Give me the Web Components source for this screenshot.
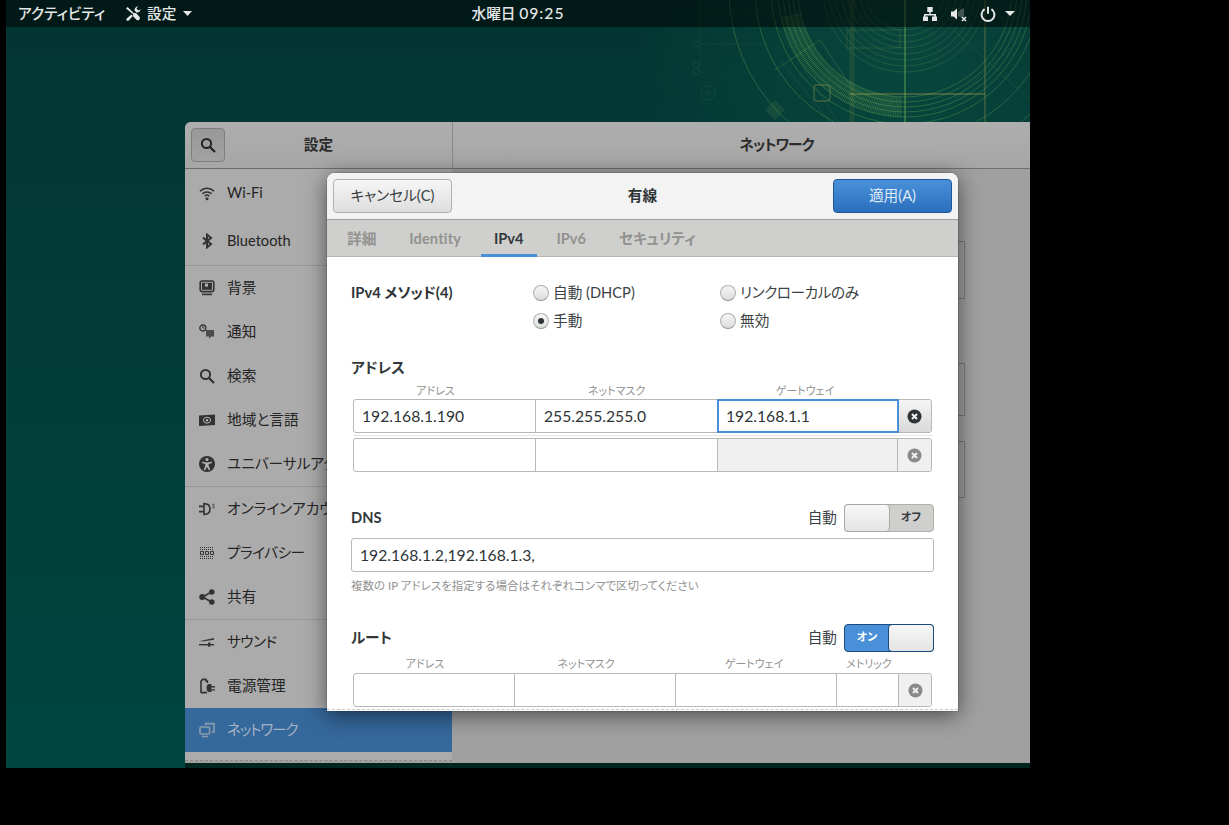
<!doctype html>
<html lang="ja">
<head>
<title>設定</title>
<meta charset="utf-8">
<style>
html, body { margin: 0; height: 100%; background: #000; overflow: hidden; }
body { font: 14.67px/20px Lato, "Noto Sans CJK JP", sans-serif; font-feature-settings: "palt"; color: #2e3436; }
</style>
</head>
<body>
<gnome-desktop>
  <top-bar slot="bar"></top-bar>
  <settings-window>
    <side-item icon="wifi" tall>Wi-Fi</side-item>
    <side-item icon="bluetooth" tall sep>Bluetooth</side-item>
    <side-item icon="background">背景</side-item>
    <side-item icon="notify">通知</side-item>
    <side-item icon="search">検索</side-item>
    <side-item icon="region">地域と言語</side-item>
    <side-item icon="access" sep>ユニバーサルアクセス</side-item>
    <side-item icon="online">オンラインアカウント</side-item>
    <side-item icon="privacy" style="letter-spacing:-.5px">プライバシー</side-item>
    <side-item icon="share" sep>共有</side-item>
    <side-item icon="sound" style="letter-spacing:-.5px">サウンド</side-item>
    <side-item icon="power">電源管理</side-item>
    <side-item icon="network" active style="letter-spacing:-1.2px">ネットワーク</side-item>
  </settings-window>
  <net-dialog heading="有線" slot="dialog">
    <gtk-button slot="start">キャンセル(C)</gtk-button>
    <gtk-button slot="end" suggested>適用(A)</gtk-button>
    <tab-item slot="tabs">詳細</tab-item>
    <tab-item slot="tabs" style="letter-spacing:.15px">Identity</tab-item>
    <tab-item slot="tabs" active>IPv4</tab-item>
    <tab-item slot="tabs">IPv6</tab-item>
    <tab-item slot="tabs">セキュリティ</tab-item>

    <method-grid>
      <b slot="label">IPv4 メソッド(4)</b>
      <radio-option>自動 (DHCP)</radio-option>
      <radio-option style="letter-spacing:-.45px">リンクローカルのみ</radio-option>
      <radio-option checked>手動</radio-option>
      <radio-option>無効</radio-option>
    </method-grid>

    <section-head style="margin-top:23px;height:20px">アドレス</section-head>
    <column-heads cols="169px 193px 184px" style="margin-top:6px;margin-bottom:1px">
      <span>アドレス</span><span>ネットマスク</span><span>ゲートウェイ</span>
    </column-heads>
    <ip-row cols="182px 182px 180px 33px">
      <ip-cell>192.168.1.190</ip-cell><ip-cell>255.255.255.0</ip-cell><ip-cell focused>192.168.1.1</ip-cell><x-button></x-button>
    </ip-row>
    <ip-row cols="182px 182px 180px 33px" divided>
      <ip-cell></ip-cell><ip-cell></ip-cell><ip-cell disabled></ip-cell><x-button disabled></x-button>
    </ip-row>

    <section-head style="margin-top:32px">DNS<on-off slot="end"></on-off></section-head>
    <text-entry style="margin-top:6px">192.168.1.2,192.168.1.3,</text-entry>
    <hint-text style="margin-top:7px">複数の IP アドレスを指定する場合はそれぞれコンマで区切ってください</hint-text>

    <section-head style="margin-top:31px">ルート<on-off slot="end" on></on-off></section-head>
    <column-heads cols="148px 174px 162px 68px" style="margin-top:5px;margin-bottom:2px">
      <span>アドレス</span><span>ネットマスク</span><span>ゲートウェイ</span><span>メトリック</span>
    </column-heads>
    <ip-row cols="161px 161px 161px 62px 32px">
      <ip-cell></ip-cell><ip-cell></ip-cell><ip-cell></ip-cell><ip-cell></ip-cell><x-button disabled></x-button>
    </ip-row>
  </net-dialog>
</gnome-desktop>

<script>
const ICONS = {
  wifi: `<g fill="none" stroke="currentColor" stroke-width="1.5"><path d="M1 6.2a10 10 0 0 1 14 0"/><path d="M3.4 8.8a6.6 6.6 0 0 1 9.2 0"/><path d="M5.7 11.2a3.3 3.3 0 0 1 4.6 0"/></g><circle cx="8" cy="13.8" r="1.5" fill="currentColor"/>`,
  bluetooth: `<path d="M4 4.6 12 11 8 14.4V1.6L12 5 4 11.4" fill="none" stroke="currentColor" stroke-width="2"/>`,
  background: `<rect x="1.2" y="1" width="13.6" height="10.6" rx="2" fill="none" stroke="currentColor" stroke-width="1.6"/><rect x="3" y="2.8" width="10" height="7" fill="currentColor"/><rect x="6" y="3.6" width="3" height="3" fill="#b5b5b5"/><rect x="3" y="13.6" width="10" height="1.6" fill="currentColor"/>`,
  notify: `<circle cx="3.8" cy="4" r="3" fill="none" stroke="currentColor" stroke-width="1.3"/><path d="M3.8 2.4V4H5.2" fill="none" stroke="currentColor"/><path d="M7 6h8v6.6h-3L10 15v-2.4H7z" fill="currentColor" opacity=".8"/>`,
  search: `<circle cx="6.5" cy="6.5" r="4.6" fill="none" stroke="currentColor" stroke-width="2"/><path d="M10 10l5 5" stroke="currentColor" stroke-width="2.2"/>`,
  region: `<path d="M0 3.5 16 2.5V13L0 14z" fill="currentColor"/><ellipse cx="8" cy="8.2" rx="3.6" ry="3" fill="none" stroke="#b5b5b5"/><circle cx="8" cy="8.2" r="1.2" fill="#b5b5b5"/>`,
  access: `<circle cx="8" cy="8" r="8" fill="currentColor"/><circle cx="8" cy="3.6" r="1.5" fill="#b5b5b5"/><path d="M3 5.8 8 6.6l5-.8v1.3l-3.4.9.2 2.2 1.4 3.6-1.3.4L8 10.8l-1.9 3.4-1.3-.4 1.4-3.6.2-2.2L3 7.1z" fill="#b5b5b5"/>`,
  online: `<path d="M5 2.6c4.2 0 6 2.6 6 5.4s-1.8 5.4-6 5.4z" fill="none" stroke="currentColor" stroke-width="1.6"/><path d="M0 5.4h5M0 10.6h5" stroke="currentColor" stroke-width="1.6"/><path d="M15.4 3.6c-1-.8-2-.4-1.9.4.1.9 1.9 1 1.9 2s-1.1 1.2-2 .5" fill="none" stroke="currentColor" stroke-width=".8"/>`,
  privacy: `<g fill="none" stroke="currentColor"><path d="M1 2.5h14M1 4.5h14M1 11.5h14M1 13.5h14" stroke-dasharray="1 1" stroke-width="1.2"/><path d="M1.5 6.5h3v3h-3zM6.5 6.5h3v3h-3zM11.5 6.5h3v3h-3z"/></g>`,
  share: `<path d="M12.5 3 3.5 8l9 5" fill="none" stroke="currentColor" stroke-width="1.6"/><circle cx="12.8" cy="3" r="2.8" fill="currentColor"/><circle cx="3.2" cy="8" r="3" fill="currentColor"/><circle cx="12.8" cy="13" r="2.8" fill="currentColor"/>`,
  sound: `<path d="M0 7.2 15 4v1.8L5 7.2z" fill="currentColor"/><path d="M0 10h15v1.4H0z" fill="currentColor"/><path d="M9 8.6h2.4v4H9z" fill="currentColor"/>`,
  power: `<path d="M2 15V3.2L3.6 1.4h3.4V3h1.4v2" fill="none" stroke="currentColor" stroke-width="1.6"/><path d="M2 14.6h6" stroke="currentColor" stroke-width="1.8"/><path d="M10 6h2.4v2H16v1.4h-3.6v1.8H16v1.4h-3.6V14H10c-1.6 0-2.4-1.4-2.4-4s.8-4 2.4-4z" fill="currentColor"/>`,
  network: `<rect x="1" y="5" width="9.6" height="7" rx="1" fill="none" stroke="currentColor" stroke-width="1.6"/><path d="M3 14.5h6" stroke="currentColor" stroke-width="1.6"/><path d="M6.6 3V1.6H15V10h-2.4" fill="none" stroke="currentColor" stroke-width="1.6"/>`
};

// base class, every element renders its shadow root once it is in the page
class Shadowed extends HTMLElement {
  constructor() {
    super();
    this.attachShadow({ mode: "open" });
  }
  connectedCallback() {
    if (!this.shadowRoot.childNodes.length) this.shadowRoot.innerHTML = this.render();
  }
}

class GnomeDesktop extends Shadowed {
  wallpaper() {
    let s = "";
    const cx = 905, cy = -10;
    for (const r of [40, 46, 52, 58, 64, 70, 76, 82])
      s += `<circle cx="${cx}" cy="${cy}" r="${r}" fill="none" stroke="#a8c860" stroke-opacity=".16"/>`;
    for (const r of [107, 112, 117, 122, 127, 134, 150, 176])
      s += `<circle cx="${cx}" cy="${cy}" r="${r}" fill="none" stroke="#8fd060" stroke-opacity=".26"/>`;
    // hatching of the wide band
    for (let a = 92; a < 168; a += 0.8) {
      const t = a * Math.PI / 180, c = Math.cos(t), n = Math.sin(t);
      s += `<path d="M${cx + 107 * c} ${cy + 107 * n}L${cx + 127 * c} ${cy + 127 * n}" stroke="#8fd060" stroke-opacity=".32" stroke-width=".7"/>`;
    }
    s += `
      <path d="M905 0V122" stroke="#86c45a" stroke-opacity=".35" stroke-width="2"/>
      <path d="M985 0V122" stroke="#b0a44c" stroke-opacity=".24" stroke-width="2"/>
      <path d="M852 0V122" stroke="#b0a44c" stroke-opacity=".12" stroke-width="5"/>
      <path d="M850 94H985" stroke="#b0a44c" stroke-opacity=".32" stroke-width="2"/>
      <path d="M847 30H900V48H847z" fill="none" stroke="#b0a44c" stroke-opacity=".18"/>
      <path d="M775 70 820 40 850 85" fill="none" stroke="#8fd060" stroke-opacity=".2"/>
      <path d="M780 60 830 122M760 0 838 122M930 122 1030 30M950 27 1030 100" stroke="#8fd060" stroke-opacity=".1" fill="none"/>
      <rect x="814" y="85" width="16" height="16" rx="3" fill="none" stroke="#b0a44c" stroke-opacity=".35" stroke-width="1.4"/>
      <path d="M775 100 785 110 775 120 765 110z" fill="#8fae5a" fill-opacity=".12"/>
      <path d="M700 0V75M700 44H770M700 72H750M700 11H790" stroke="#8fd060" stroke-opacity=".07" fill="none"/>
      <g fill="none" stroke="#8fd060" stroke-opacity=".09"><circle cx="696" cy="44" r="3"/><circle cx="696" cy="65" r="3"/><circle cx="696" cy="72" r="3"/><circle cx="708" cy="93" r="7"/><circle cx="708" cy="93" r="2"/></g>`;
    return s;
  }
  render() {
    return `<style>
      :host { display: block; position: relative; width: 1024px; height: 768px; margin-left: 6px; overflow: hidden;
              background: linear-gradient(#033531, #004540); }
      svg { position: absolute; inset: 0; }
    </style>
    <svg width="1024" height="768" viewBox="6 0 1024 768">
      <defs><radialGradient id="glow" gradientUnits="userSpaceOnUse" cx="900" cy="50" r="260">
        <stop offset="0" stop-color="#1f8a68" stop-opacity=".2"/><stop offset="1" stop-color="#1f8a68" stop-opacity="0"/>
      </radialGradient></defs>
      <rect x="600" y="0" width="430" height="130" fill="url(#glow)"/>${this.wallpaper()}
    </svg>
    <slot name="bar"></slot><slot></slot><slot name="dialog"></slot>`;
  }
}

class TopBar extends Shadowed {
  render() {
    return `<style>
      :host { display: grid; grid-template-columns: 1fr auto 1fr; align-items: center; position: relative; height: 27px;
              padding: 0 12px; box-sizing: border-box; background: rgba(0,0,0,.52); color: #e6e8e8; font-weight: 500; }
      .l, .r { display: flex; align-items: center; }
      .r { justify-content: flex-end; padding-right: 3px; }
      svg { display: block; flex: none; }
      .tools { margin-left: 20px; }
      .name { margin-left: 6px; }
      .caret { margin-left: 7px; }
      .vol { margin-left: 12px; }
      .pow { margin-left: 13px; }
      .r .caret { margin-left: 9px; }
      .time { font-size: 15.7px; letter-spacing: 1px; }
    </style>
    <div class="l"><span>アクティビティ</span>
      <svg class="tools" width="16" height="16" viewBox="0 0 16 16"><path d="M1 2.6 2.6 1 9 7.2l2-.3 3.6 4.2c.6 1 .3 2-.3 2.6-.6.6-1.6.9-2.6.3L8 10.2l.2-2zM6.4 8.6l1.4 1.4-4 4.4c-.6.5-1.6.6-2.1 0-.6-.5-.5-1.5 0-2z" fill="currentColor"/><path d="M15.6 3.2c0 2.2-2 3.8-4.2 3.2L9.6 4.6C9.2 2.4 11 .4 13.2.4L11.4 2.4l2 2z" fill="currentColor"/></svg>
      <span class="name">設定</span>
      <svg class="caret" width="9" height="5" viewBox="0 0 9 5"><path d="M0 0h9L4.5 5z" fill="currentColor"/></svg>
    </div>
    <div>水曜日 <span class="time">09:25</span></div>
    <div class="r">
      <svg width="16" height="16" viewBox="0 0 16 16"><path d="M5.3 1h5.4v5H8.7v2h5.3v2.5h1v4.500H10v-4.500h2.500V9.500h-9v1H6v4.500H1v-4.500h1V8h5.300V6H5.300z" fill="currentColor"/></svg>
      <svg class="vol" width="17" height="16" viewBox="0 0 17 16"><path d="M1 5.5h2.5L7 2.5v11l-3.500-3H1z" fill="currentColor"/><path d="M9 5.500v5M11 3.500v8M13 2.500v8" stroke="currentColor" stroke-opacity=".45" stroke-width="1.2" fill="none"/><path d="M12 11l4 4M16 11l-4 4" stroke="currentColor" stroke-width="1.6"/></svg>
      <svg class="pow" width="16" height="16" viewBox="0 0 16 16"><path d="M4.6 3.2a6.4 6.4 0 1 0 6.8 0" fill="none" stroke="currentColor" stroke-width="2"/><path d="M8 .8v7" stroke="currentColor" stroke-width="2"/></svg>
      <svg class="caret" width="10" height="5" viewBox="0 0 10 5"><path d="M0 0h10L5 5z" fill="currentColor"/></svg>
    </div>`;
  }
}

class SettingsWindow extends Shadowed {
  render() {
    return `<style>
      :host { display: grid; grid-template-columns: 268px 1fr; grid-template-rows: 47px 1fr; position: absolute; left: 179px; top: 122px;
              width: 915px; height: 641px; background: #a0a0a0; border-radius: 6px 6px 0 0; box-shadow: 0 5px 0 #02241f; color: #242424; }
      header { display: flex; align-items: center; font-weight: 700; justify-content: center; border-bottom: 1px solid #6f6f6f;
               background: linear-gradient(#aeaeae, #a6a6a6); position: relative; color: #2c2c2c; }
      .title-l { border-right: 1px solid #8a8a8a; border-radius: 6px 0 0 0; display: grid; grid-template-columns: 34px 1fr 40px; padding-left: 6px; align-items: center; }
      .search { width: 34px; height: 34px; box-sizing: border-box; border: 1px solid #7e7e7e; border-radius: 4px; display: grid; place-items: center;
                background: linear-gradient(#989898, #a2a2a2); color: #232323; }
      .title-l span { text-align: center; }
      .title-r { letter-spacing: -1px; }
      aside { background: #ababab; overflow: hidden; border-bottom: 1px dashed #8a8a8a; margin-bottom: 2px; width: 267px; }
      main { padding: 72px 0 0 135px; }
      .frame { width: 377px; box-sizing: border-box; border: 1px solid #7a7a7a; }
    </style>
    <header class="title-l">
      <div class="search"><svg width="16" height="16" viewBox="0 0 16 16">${ICONS.search}</svg></div><span>設定</span>
    </header>
    <header class="title-r">ネットワーク</header>
    <aside><slot></slot></aside>
    <main>
      <div class="frame" style="height:58px"></div>
      <div class="frame" style="height:53px;margin-top:64px"></div>
      <div class="frame" style="height:57px;margin-top:25px"></div>
    </main>`;
  }
}

class SideItem extends Shadowed {
  render() {
    const active = this.hasAttribute("active");
    return `<style>
      :host { display: flex; align-items: center; box-sizing: border-box; height: ${this.hasAttribute("tall") ? 48 : 44}px; padding-left: 14px; gap: 12px;
              white-space: nowrap; ${this.hasAttribute("sep") ? "height:" + (this.hasAttribute("tall") ? 49 : 45) + "px;border-bottom:1px solid #979797;" : ""}
              ${active ? "background:#35689b;color:#a3b4c5;" : ""} }
      svg { flex: none; color: ${active ? "#8b9caf" : "#333"}; }
    </style>
    <svg width="16" height="16" viewBox="0 0 16 16">${ICONS[this.getAttribute("icon")]}</svg><slot></slot>`;
  }
}

class NetDialog extends Shadowed {
  render() {
    return `<style>
      :host { display: flex; flex-direction: column; position: absolute; left: 321px; top: 173px; width: 631px; height: 538px; box-sizing: border-box;
              background: #fff; border-radius: 8px 8px 0 0; box-shadow: 0 4px 22px rgba(0,0,0,.55), 0 0 0 1px rgba(0,0,0,.1); overflow: hidden; }
      header { display: flex; align-items: center; justify-content: space-between; height: 47px; flex: none; box-sizing: border-box; padding: 0 6px;
               background: #f3f3f3; border-bottom: 1px solid #9e9e9b; }
      h1 { font-size: inherit; margin: 0; font-weight: 700; }
      nav { display: flex; gap: 6.8px; flex: none; height: 37px; box-sizing: border-box; padding-left: 7px; background: #cfcfcd; border-bottom: 1px solid #b6b6b3; }
      .body { flex: 1; padding: 22px 24px 0; overflow: hidden; position: relative; }
      .overshoot { position: absolute; left: 0; right: 0; bottom: 1px; border-top: 1px dashed #c8c8c8; }
    </style>
    <header><slot name="start"></slot><h1>${this.getAttribute("heading")}</h1><slot name="end"></slot></header>
    <nav><slot name="tabs"></slot></nav>
    <div class="body"><slot></slot><div class="overshoot"></div></div>`;
  }
}

class GtkButton extends Shadowed {
  render() {
    const s = this.hasAttribute("suggested");
    return `<style>
      :host { display: flex; align-items: center; justify-content: center; width: 119px; height: 34px; box-sizing: border-box; border-radius: 4px;
              border: 1px solid ${s ? "#1c5799" : "#b0b0ae"}; color: ${s ? "#dfeaf6" : "#3a3f41"};
              background: linear-gradient(${s ? "#4a90d9, #2a6fbd" : "#f6f6f6, #dedede"}); }
    </style><slot></slot>`;
  }
}

class TabItem extends Shadowed {
  render() {
    const a = this.hasAttribute("active");
    return `<style>
      :host { display: flex; align-items: center; padding: 0 13px; height: 36px; box-sizing: border-box; font-weight: 700; padding-top: 1px;
              color: ${a ? "#33393b" : "#92928f"}; ${a ? "border-bottom:3px solid #4a90d9;height:37px;padding-top:3px;" : ""} }
    </style><slot></slot>`;
  }
}

class MethodGrid extends Shadowed {
  render() {
    return `<style>
      :host { display: grid; grid-template-columns: 182px 1fr; grid-template-rows: 28px 28px; }
      .l { display: flex; align-items: center; grid-row: 1; }
      .radios { display: grid; grid-template-columns: 187px 1fr; grid-auto-rows: 28px; grid-row: 1 / 3; }
    </style>
    <div class="l"><slot name="label"></slot></div>
    <div class="radios"><slot></slot></div>`;
  }
}

class RadioOption extends Shadowed {
  render() {
    return `<style>
      :host { display: flex; align-items: center; gap: 4px; color: #3c4244; }
      i { width: 16px; height: 16px; box-sizing: border-box; border-radius: 50%; border: 1px solid #b0b0ae; border-bottom-color: #98988f;
          background: linear-gradient(#f7f7f7, #dcdcdc); display: grid; place-items: center; flex: none; }
      u { width: 6px; height: 6px; border-radius: 50%; background: #2e3436; }
    </style><i>${this.hasAttribute("checked") ? "<u></u>" : ""}</i><span><slot></slot></span>`;
  }
}

class SectionHead extends Shadowed {
  render() {
    return `<style>
      :host { display: flex; align-items: center; justify-content: space-between; font-weight: 700; color: #33393b; }
      .end { display: flex; align-items: center; gap: 7px; font-weight: 400; color: #3c4244; }
    </style><span><slot></slot></span>
    ${this.querySelector("[slot=end]") ? `<div class="end"><span>自動</span><slot name="end"></slot></div>` : ""}`;
  }
}

class ColumnHeads extends Shadowed {
  render() {
    return `<style>
      :host { display: grid; grid-template-columns: ${this.getAttribute("cols")}; height: 14px; line-height: 14px; font-size: 11px; color: #929292; }
      ::slotted(span) { text-align: center; }
    </style><slot></slot>`;
  }
}

class IpRow extends Shadowed {
  render() {
    return `<style>
      :host { display: grid; grid-template-columns: ${this.getAttribute("cols")}; margin: 0 2px; height: 34px; box-sizing: border-box;
              border: 1px solid #b8b8b5; border-radius: 3px; background: #fff; position: relative; }
      ${this.hasAttribute("divided") ? ":host { margin-top: 5px; } .line { position: absolute; left: -1px; right: -2px; top: -4px; border-top: 1px solid #e4e4e4; }" : ""}
    </style>${this.hasAttribute("divided") ? '<div class="line"></div>' : ""}<slot></slot>`;
  }
}

class IpCell extends Shadowed {
  render() {
    const f = this.hasAttribute("focused"), d = this.hasAttribute("disabled");
    return `<style>
      :host { display: flex; align-items: center; padding-left: 8px; box-sizing: border-box; font-size: 15.7px; color: #2e3436;
              border-right: 1px solid #b8b8b5; position: relative; ${d ? "background:#f0f0f0;" : ""}
              ${f ? "border-right:0;box-shadow:inset 0 0 0 1px #4a90d9,0 0 0 1px #4a90d9;z-index:1;" : ""} }
    </style><slot></slot>`;
  }
}

class XButton extends Shadowed {
  render() {
    const d = this.hasAttribute("disabled");
    return `<style>
      :host { display: grid; place-items: center; border-radius: 0 3px 3px 0; color: ${d ? "#8a8a8a" : "#2e3436"};
              background: ${d ? "#f0f0f0" : "linear-gradient(#f5f5f5, #d9d9d9)"}; }
    </style><svg width="15" height="15" viewBox="0 0 15 15"><circle cx="7.5" cy="7.5" r="7" fill="currentColor"/><path d="M5 5l5 5M10 5l-5 5" stroke="#f0f0f0" stroke-width="2"/></svg>`;
  }
}

class OnOff extends Shadowed {
  render() {
    const on = this.hasAttribute("on");
    const knob = `<i></i>`, label = `<span>${on ? "オン" : "オフ"}</span>`;
    return `<style>
      :host { display: flex; width: 90px; height: 28px; box-sizing: border-box; border-radius: 4px; border: 1px solid ${on ? "#1c4a7a" : "#b0afaa"};
              background: ${on ? "#4a90d9" : "#cfcfcd"}; color: ${on ? "#fff" : "#33393b"}; font-size: 11px; font-weight: 700; }
      span { flex: 1; text-align: center; line-height: 24px; }
      i { width: 46px; margin: -1px; box-sizing: border-box; border-radius: 4px; border: 1px solid ${on ? "#1c4a7a" : "#a8a8a4"}; background: linear-gradient(#f7f7f7, #e4e4e4); }
    </style>${on ? label + knob : knob + label}`;
  }
}

class TextEntry extends Shadowed {
  render() {
    return `<style>
      :host { display: flex; align-items: center; height: 34px; box-sizing: border-box; padding-left: 8px; font-size: 15.7px; color: #2e3436;
              border: 1px solid #b8b8b5; border-radius: 3px; }
    </style><slot></slot>`;
  }
}

class HintText extends Shadowed {
  render() {
    return `<style>
      :host { display: block; height: 14px; line-height: 14px; font-size: 11.5px; color: #929292; white-space: nowrap; }
    </style><slot></slot>`;
  }
}

customElements.define("gnome-desktop", GnomeDesktop);
customElements.define("top-bar", TopBar);
customElements.define("settings-window", SettingsWindow);
customElements.define("side-item", SideItem);
customElements.define("net-dialog", NetDialog);
customElements.define("gtk-button", GtkButton);
customElements.define("tab-item", TabItem);
customElements.define("method-grid", MethodGrid);
customElements.define("radio-option", RadioOption);
customElements.define("section-head", SectionHead);
customElements.define("column-heads", ColumnHeads);
customElements.define("ip-row", IpRow);
customElements.define("ip-cell", IpCell);
customElements.define("x-button", XButton);
customElements.define("on-off", OnOff);
customElements.define("text-entry", TextEntry);
customElements.define("hint-text", HintText);
</script>
</body>
</html>
